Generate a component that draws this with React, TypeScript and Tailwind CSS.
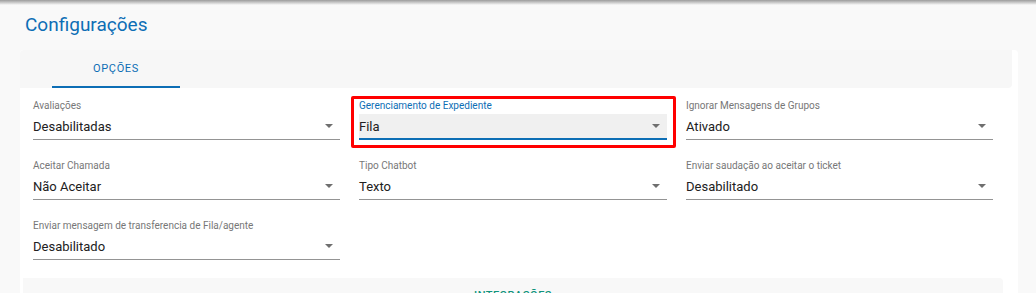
import React from 'react';

type Field = { label: string; value: string; focused?: boolean };

// Form fields in row order (three per row)
const fields: Field[] = [
  { label: 'Avaliações', value: 'Desabilitadas' },
  { label: 'Gerenciamento de Expediente', value: 'Fila', focused: true },
  { label: 'Ignorar Mensagens de Grupos', value: 'Ativado' },
  { label: 'Aceitar Chamada', value: 'Não Aceitar' },
  { label: 'Tipo Chatbot', value: 'Texto' },
  { label: 'Enviar saudação ao aceitar o ticket', value: 'Desabilitado' },
  { label: 'Enviar mensagem de transferencia de Fila/agente', value: 'Desabilitado' },
];

function SelectField({ field }: { field: Field }) {
  return (
    <div className="relative h-[40px]">
      <div
        className={`h-[12px] leading-[12px] text-[10px] whitespace-nowrap ${
          field.focused ? 'text-[#0d6eb5]' : 'text-[#777777]'
        }`}
      >
        {field.label}
      </div>
      <div
        className={`flex items-center justify-between box-border ${
          field.focused
            ? 'bg-[#f0f0f0] border-b-2 border-[#0d6eb5] mt-[2px] h-[26px]'
            : 'h-[28px] border-b border-[#949494]'
        }`}
      >
        <span className={`text-[13px] text-[#212121] leading-none ${field.focused ? '' : 'pt-[2px]'}`}>
          {field.value}
        </span>
        <span className="mr-[7px] w-0 h-0 border-x-[4px] border-t-[4px] border-x-transparent border-t-[#6f6f6f]" />
      </div>
      {field.focused && (
        <div className="absolute -left-[8px] -top-[4px] -right-[9px] -bottom-[8px] border-[3px] border-[#ff0000] rounded-[2px] pointer-events-none" />
      )}
    </div>
  );
}

export default function App() {
  return (
    <div
      className="w-[1036px] h-[293px] overflow-hidden bg-[#f9f9f9]"
      style={{ fontFamily: 'Roboto, "Liberation Sans", sans-serif' }}
    >
      {/* top app bar shadow */}
      <div className="h-[5px] bg-gradient-to-b from-[#9c9c9c] to-[#f9f9f9]" />

      <h1 className="mt-[8px] ml-[25px] text-[19px] leading-[24px] text-[#0d6eb5] font-normal">
        Configurações
      </h1>

      {/* settings card */}
      <div className="mt-[13px] ml-[20px] w-[998px] bg-white rounded-t-[4px]">
        {/* tabs */}
        <div className="h-[38px] w-[992px] bg-[#f7f7f7] rounded-tl-[4px] rounded-br-[4px] flex">
          <div className="ml-[32px] w-[128px] flex items-center justify-center border-b-2 border-[#0d6eb5]">
            <span className="text-[11px] tracking-[0.06em] text-[#0d6eb5] pt-[2px]">OPÇÕES</span>
          </div>
        </div>

        <div className="pt-[12px] pl-[13px] grid grid-cols-[307px_308px_307px] gap-x-[19px] gap-y-[20px]">
          {fields.map((f) => (
            <SelectField key={f.label} field={f} />
          ))}
        </div>

        {/* next section tab */}
        <div className="mt-[18px] ml-[3px] w-[980px] h-[36px] bg-[#f8f8f8] rounded-tr-[4px] flex items-center justify-center">
          <span className="text-[11px] tracking-[0.04em] text-[#10947c] font-medium">INTEGRAÇÕES</span>
        </div>
      </div>
    </div>
  );
}
